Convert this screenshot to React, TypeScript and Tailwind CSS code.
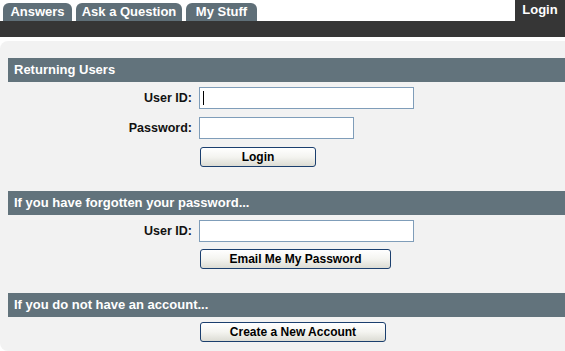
import React from 'react';

const tabs = [
  { label: 'Answers', w: 'w-[69px]' },
  { label: 'Ask a Question', w: 'w-[106px]' },
  { label: 'My Stuff', w: 'w-[71px]' },
];

const SectionHeader = ({ title }: { title: string }) => (
  <div className="ml-[8px] h-[24px] bg-[#62737c] px-[6px] flex items-center text-white font-bold text-[13px]">
    {title}
  </div>
);

const Field = ({ label, width, caret }: { label: string; width: string; caret?: boolean }) => (
  <div className="flex items-center">
    <div className="w-[193px] pr-[1px] text-right font-bold text-[12.5px] text-[#111]">{label}</div>
    <div className={`ml-[6px] h-[22px] ${width} border border-[#7f9db9] bg-white flex items-center`}>
      {caret && <div className="ml-[3px] w-px h-[14px] bg-black" />}
    </div>
  </div>
);

const XpButton = ({ label, width }: { label: string; width: string }) => (
  <button
    className={`ml-[200px] h-[20px] ${width} rounded-[3px] border border-[#1b3f6e] bg-gradient-to-b from-white via-[#f4f4f0] to-[#dcdcd4] text-[12px] font-bold text-black flex items-center justify-center`}
  >
    {label}
  </button>
);

const App = () => {
  return (
    <div className="w-[565px] h-[351px] bg-white overflow-hidden font-['Liberation_Sans',Arial,sans-serif]">
      {/* tab strip */}
      <div className="h-[21px] flex items-end">
        <div className="flex items-end ml-[3px] gap-[4px]">
          {tabs.map((t) => (
            <div
              key={t.label}
              className={`h-[18px] ${t.w} rounded-t-[6px] bg-[#5f6f78] text-white font-bold text-[13px] leading-[18px] text-center`}
            >
              {t.label}
            </div>
          ))}
        </div>
        <div className="ml-auto h-[21px] w-[50px] bg-[#363636] text-white font-bold text-[13px] leading-[20px] text-center">
          Login
        </div>
      </div>
      <div className="h-[16px] bg-[#363636]" />
      <div className="h-[4px]" />

      <div className="bg-[#f2f2f2] rounded-l-[8px] pt-[17px] h-[310px]">
        <SectionHeader title="Returning Users" />
        <div className="mt-[5px]">
          <Field label="User ID:" width="w-[215px]" caret />
        </div>
        <div className="mt-[8px]">
          <Field label="Password:" width="w-[155px]" />
        </div>
        <div className="mt-[8px]">
          <XpButton label="Login" width="w-[116px]" />
        </div>

        <div className="mt-[24px]">
          <SectionHeader title="If you have forgotten your password..." />
        </div>
        <div className="mt-[5px]">
          <Field label="User ID:" width="w-[215px]" />
        </div>
        <div className="mt-[7px]">
          <XpButton label="Email Me My Password" width="w-[191px]" />
        </div>

        <div className="mt-[24px]">
          <SectionHeader title="If you do not have an account..." />
        </div>
        <div className="mt-[5px]">
          <XpButton label="Create a New Account" width="w-[186px]" />
        </div>
      </div>
    </div>
  );
};

export default App;
